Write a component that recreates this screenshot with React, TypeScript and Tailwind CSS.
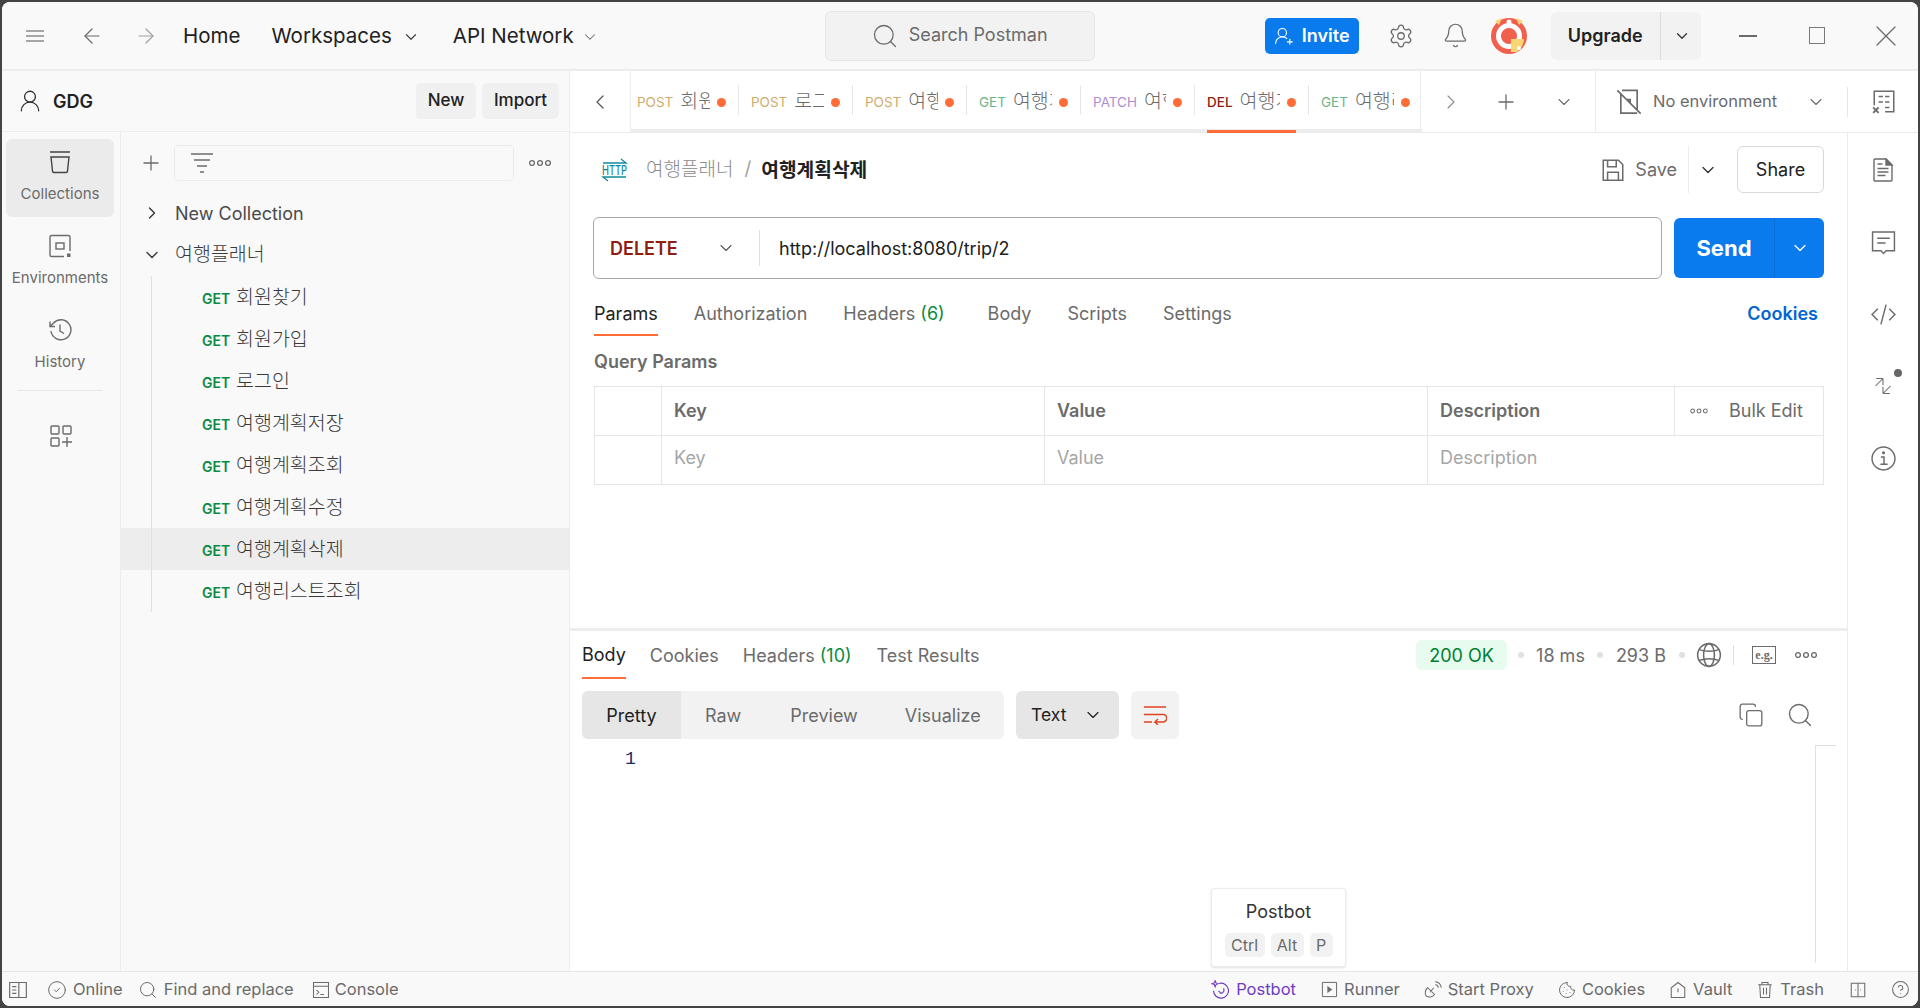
import {
  ArrowLeft,
  ArrowRight,
  Bell,
  ChevronDown,
  ChevronLeft,
  ChevronRight,
  CircleCheck,
  CircleHelp,
  Cookie,
  Copy,
  Plus,
  Search,
  Settings,
  UserRound,
  UserRoundPlus,
  X,
} from "lucide-react";
import type { ReactNode } from "react";

const KO = "font-['Inter','Noto_Sans_CJK_KR',sans-serif]";

const tabs = [
  { m: "POST", c: "text-[#d0ad6c]", t: "회원가입", w: "w-[107px] pl-[6px]" },
  { m: "POST", c: "text-[#d0ad6c]", t: "로그인", w: "w-[114px] pl-[13px]" },
  { m: "POST", c: "text-[#d0ad6c]", t: "여행계획저장", w: "w-[114px] pl-[13px]" },
  { m: "GET", c: "text-[#6bb58a]", t: "여행계획조회", w: "w-[114px] pl-[13px]" },
  { m: "PATCH", c: "text-[#ac8fd0]", t: "여행계획수정", w: "w-[114px] pl-[13px]" },
  { m: "DEL", c: "text-[#8f1d10]", t: "여행계획삭제", w: "w-[114px] pl-[13px]", active: true },
  { m: "GET", c: "text-[#6bb58a]", t: "여행리스트조회", w: "w-[114px] pl-[13px]" },
];

const requests = [
  "회원찾기",
  "회원가입",
  "로그인",
  "여행계획저장",
  "여행계획조회",
  "여행계획수정",
  "여행계획삭제",
  "여행리스트조회",
];

function Svg({ size = 24, children, className = "" }: { size?: number; children: ReactNode; className?: string }) {
  return (
    <svg
      width={size}
      height={size}
      viewBox="0 0 24 24"
      fill="none"
      stroke="currentColor"
      strokeWidth={1.4}
      className={`shrink-0 ${className}`}
    >
      {children}
    </svg>
  );
}

// the three open circles Postman uses for its "more" buttons
function Dots({ className = "" }: { className?: string }) {
  return (
    <svg width="22" height="8" viewBox="0 0 22 8" fill="none" stroke="currentColor" strokeWidth="1.3" className={`shrink-0 ${className}`}>
      <circle cx="3" cy="4" r="2.4" />
      <circle cx="11" cy="4" r="2.4" />
      <circle cx="19" cy="4" r="2.4" />
    </svg>
  );
}

function Logo() {
  return (
    <svg width="36" height="36" viewBox="0 0 36 36" className="shrink-0">
      <circle cx="18" cy="18" r="18" fill="#f0604c" />
      <path d="M4 3 L11 0 L8 7 Z M32 3 L25 0 L28 7 Z" fill="#f7d774" />
      <circle cx="18" cy="4" r="2.5" fill="#fff" />
      <circle cx="18" cy="18" r="10.5" fill="none" stroke="#fff" strokeWidth="5" />
      <path d="M20 21h13a18 18 0 0 1-7 13h-6z" fill="#f7d774" />
      <circle cx="28" cy="30" r="2" fill="#fff" />
    </svg>
  );
}

function TitleBar() {
  return (
    <div className="flex h-[69px] shrink-0 items-center border-b-2 border-[#ececec] bg-[#f9f9f9] text-[#212121]">
      <div className="ml-[24px] w-[18px] text-[#8a8a8a]">
        <svg width="18" height="12" viewBox="0 0 18 12" stroke="currentColor" strokeWidth="1.4">
          <path d="M0 1h18M0 6h18M0 11h18" />
        </svg>
      </div>
      <ArrowLeft size={24} strokeWidth={1.2} className="ml-[36px] text-[#6b6b6b]" />
      <ArrowRight size={24} strokeWidth={1.2} className="ml-[30px] text-[#a0a0a0]" />
      <span className="ml-[25px] pt-[2px] text-[20.5px]">Home</span>
      <span className="ml-[31px] flex items-center pt-[2px] text-[20.5px]">
        Workspaces
        <ChevronDown size={18} strokeWidth={1.6} className="ml-[10px] text-[#444]" />
      </span>
      <span className="ml-[33px] flex items-center pt-[2px] text-[20.5px]">
        API Network
        <ChevronDown size={18} strokeWidth={1.4} className="ml-[7px] text-[#6b6b6b]" />
      </span>
      <div className="ml-[226px] flex h-[50px] w-[270px] items-center rounded-[6px] border border-[#e6e6e6] bg-[#f2f2f2] pl-[45px] text-[18px] text-[#6b6b6b]">
        <Search size={28} strokeWidth={1.1} />
        <span className="ml-[10px] pb-[2px]">Search Postman</span>
      </div>
      <div className="ml-[170px] flex h-[36px] w-[94px] items-center justify-center gap-[8px] rounded-[5px] bg-[#097bed] text-[18px] font-semibold text-white">
        <UserRoundPlus size={20} strokeWidth={1.3} />
        Invite
      </div>
      <Settings size={26} strokeWidth={1.2} className="ml-[29px] text-[#6b6b6b]" />
      <Bell size={27} strokeWidth={1.1} className="ml-[28px] text-[#6b6b6b]" />
      <div className="ml-[22px]">
        <Logo />
      </div>
      <div className="ml-[24px] flex h-[48px] w-[150px] items-center rounded-[6px] bg-[#f2f2f2]">
        <span className="w-[110px] border-r border-[#dcdcdc] text-center text-[18px] leading-[48px] font-semibold">
          Upgrade
        </span>
        <ChevronDown size={18} strokeWidth={1.7} className="ml-[12px] text-[#333]" />
      </div>
      <div className="ml-[38px] h-[2px] w-[18px] bg-[#6b6b6b]" />
      <div className="ml-[52px] h-[17px] w-[16px] border border-[#7a7a7a]" />
      <X size={36} strokeWidth={0.85} className="ml-[43px] text-[#6b6b6b]" />
    </div>
  );
}

function RailItem({ label, icon, active }: { label: string; icon: ReactNode; active?: boolean }) {
  return (
    <div
      className={`mx-[4px] flex h-[78px] w-[108px] flex-col items-center rounded-[6px] pt-[11px] text-[15px] text-[#6b6b6b] ${
        active ? "bg-[#ebebeb] text-[#3a3a3a]" : ""
      }`}
    >
      {icon}
      <span className="mt-[9px] leading-[22px]">{label}</span>
    </div>
  );
}

function Sidebar() {
  return (
    <div className="flex w-[568px] shrink-0 flex-col border-r border-[#ececec] bg-[#f9f9f9]">
      <div className="flex h-[61px] shrink-0 items-center border-b border-[#ececec]">
        <UserRound size={26} strokeWidth={1.2} className="ml-[15px] text-[#333]" />
        <span className="ml-[10px] text-[18px] font-semibold text-[#212121]">GDG</span>
        <div className="ml-auto mr-[10px] flex gap-[6px] text-[17px] font-medium text-[#212121]">
          <div className="flex h-[36px] w-[60px] items-center justify-center rounded-[5px] bg-[#f0f0f0]">New</div>
          <div className="flex h-[36px] w-[77px] items-center justify-center rounded-[5px] bg-[#f0f0f0]">Import</div>
        </div>
      </div>
      <div className="flex min-h-0 flex-1">
        <div className="flex w-[119px] shrink-0 flex-col border-r border-[#ececec] pt-[7px]">
          <RailItem
            active
            label="Collections"
            icon={
              <Svg size={24} className="text-[#444]">
                <path d="M2 2h20M3 7h18l-1.500 14a1.500 1.500 0 0 1-1.500 1.500H6A1.500 1.500 0 0 1 4.500 21z" />
              </Svg>
            }
          />
          <div className="h-[6px]" />
          <RailItem
            label="Environments"
            icon={
              <Svg size={24} className="text-[#6b6b6b]">
                <path d="M16 22.500H3.500A1.500 1.500 0 0 1 2 21V3A1.500 1.500 0 0 1 3.500 1.500h17A1.500 1.500 0 0 1 22 3v14" />
                <rect x="8" y="9" width="8" height="6" />
                <rect x="19" y="19.500" width="3.500" height="3.500" fill="currentColor" stroke="none" />
              </Svg>
            }
          />
          <div className="h-[6px]" />
          <RailItem
            label="History"
            icon={
              <Svg size={24} className="text-[#6b6b6b]">
                <path d="M3 13a10 10 0 1 0 2.500-8L2 8.500M2 3.500v5h5M12 6.500V13l4 2.500" />
              </Svg>
            }
          />
          <div className="mx-[16px] mt-[5px] h-px w-[84px] bg-[#e6e6e6]" />
          <div className="mt-[33px] flex justify-center text-[#6b6b6b]">
            <Svg size={24}>
              <rect x="2" y="2" width="8" height="8" rx="1" />
              <rect x="14" y="2" width="8" height="8" rx="1" />
              <rect x="2" y="14" width="8" height="8" rx="1" />
              <path d="M18 13v10M13 18h10" />
            </Svg>
          </div>
        </div>
        <div className="flex min-w-0 flex-1 flex-col">
          <div className="mt-[13px] flex h-[36px] items-center">
            <Plus size={24} strokeWidth={1.3} className="ml-[18px] text-[#6b6b6b]" />
            <div className="ml-[11px] flex h-[36px] w-[340px] items-center rounded-[3px] border border-[#ececec] pl-[16px] text-[#6b6b6b]">
              <svg width="22" height="20" viewBox="0 0 22 20" stroke="currentColor" strokeWidth="1.5">
                <path d="M0 1h22M3 7h16M6 13h10M9 19h4" />
              </svg>
            </div>
            <Dots className="ml-[15px] text-[#6b6b6b]" />
          </div>
          <div className={`mt-[11px] flex h-[42px] items-center text-[18px] text-[#4a4a4a] ${KO}`}>
            <ChevronRight size={20} strokeWidth={1.6} className="ml-[21px] text-[#333]" />
            <span className="ml-[13px]">New Collection</span>
          </div>
          <div className={`flex h-[42px] items-center text-[19.5px] font-light text-[#3a3a3a] ${KO}`}>
            <ChevronDown size={20} strokeWidth={1.6} className="ml-[21px] text-[#333]" />
            <span className="ml-[13px]">여행플래너</span>
          </div>
          {requests.map((r, i) => (
            <div
              key={r}
              className={`relative flex h-[42px] shrink-0 items-center pt-[2px] pl-[81px] ${i === 6 ? "bg-[#ededed]" : ""} ${KO}`}
            >
              <div className="absolute top-0 bottom-0 left-[30px] w-px bg-[#e0e0e0]" />
              <span className="w-[34px] text-[14px] font-semibold text-[#0c8a3e]">GET</span>
              <span className="text-[19.5px] font-light text-[#3a3a3a]">{r}</span>
            </div>
          ))}
        </div>
      </div>
    </div>
  );
}

function TabBar() {
  return (
    <div className="flex h-[62px] shrink-0 border-b border-[#ececec] bg-white">
      <div className="flex w-[61px] shrink-0 items-center justify-center border-r border-[#ececec]">
        <ChevronLeft size={24} strokeWidth={1.2} className="text-[#555]" />
      </div>
      <div className={`flex w-[790px] shrink-0 border-r border-[#ececec] ${KO}`}>
        {tabs.map((t, i) => (
          <div key={i} className={`flex shrink-0 items-center border-b-[3px] border-[#ededed] ${t.w}`}>
            <div
              className={`-mb-[3px] flex h-[62px] w-[89px] shrink-0 items-center border-b-[3px] pt-[4px] ${
                t.active ? "border-[#ff6c37]" : "border-transparent"
              }`}
            >
              <span className={`shrink-0 text-[13.5px] ${t.active ? "font-medium" : ""} ${t.c}`}>{t.m}</span>
              <span className="ml-[7px] min-w-0 flex-1 overflow-hidden text-[19.5px] font-light whitespace-nowrap text-[#6b6b6b]">
                {t.t}
              </span>
              <span className="ml-[7px] h-[9px] w-[9px] shrink-0 rounded-full bg-[#ff6c37]" />
            </div>
            {i < tabs.length - 1 && <span className="ml-[12px] h-[30px] w-px shrink-0 bg-[#e6e6e6]" />}
          </div>
        ))}
      </div>
      <ChevronRight size={24} strokeWidth={1.1} className="ml-[18px] self-center text-[#8a8a8a]" />
      <Plus size={24} strokeWidth={1.3} className="ml-[31px] self-center text-[#6b6b6b]" />
      <ChevronDown size={20} strokeWidth={1.3} className="ml-[36px] self-center text-[#6b6b6b]" />
      <div className="ml-[21px] flex min-w-0 flex-1 items-center border-l border-[#ececec]">
        <Svg size={28} className="ml-[19px] text-[#6b6b6b]">
          <path d="M6 2h13v17M5 5v16.500h14M2 2l20 20M10 10h3v3" />
        </Svg>
        <span className="ml-[10px] text-[16.5px] text-[#6b6b6b]">No environment</span>
        <ChevronDown size={20} strokeWidth={1.3} className="ml-[29px] text-[#6b6b6b]" />
        <div className="ml-[21px] h-[30px] w-px bg-[#e6e6e6]" />
        <Svg size={26} className="ml-[23px] text-[#6b6b6b]">
          <path d="M3 15V2h18v19H13M7 7h4M13 7h4M7 12h4M13 12h4M13 17h4" />
          <path d="M2 17l5 5M7 17l-5 5" strokeWidth={1.8} />
        </Svg>
      </div>
    </div>
  );
}

function Request() {
  return (
    <div className="flex h-[495px] shrink-0 flex-col px-[23px]">
      <div className="mt-[13px] flex h-[47px] items-center">
        <svg width="27" height="24" viewBox="0 0 27 24" fill="none" stroke="#0f8a9b" strokeWidth="1.3" className="ml-[8px]">
          <path d="M2 5h23l-5-4M25 19H2l5 4" />
          <text x="1" y="16.500" fontFamily="Inter" fontSize="13" fontWeight="500" fill="#0f8a9b" stroke="none" textLength="25" lengthAdjust="spacingAndGlyphs">
            HTTP
          </text>
        </svg>
        <span className={`ml-[18px] pt-[2px] text-[19px] font-light text-[#8a8a8a] ${KO}`}>여행플래너</span>
        <span className="ml-[11px] text-[19px] text-[#a0a0a0]">/</span>
        <span className={`ml-[10px] pt-[2px] text-[19.2px] font-bold text-[#212121] ${KO}`}>여행계획삭제</span>
        <Svg size={26} className="ml-auto text-[#6b6b6b]">
          <path d="M3 3h14l4 4v14.500H3zM7 3v6h8V3M7 21.500V14h10v7.500" />
        </Svg>
        <span className="ml-[9px] text-[18px] text-[#6b6b6b]">Save</span>
        <div className="ml-[11px] flex h-[47px] w-[38px] items-center justify-center border-l border-[#ececec]">
          <ChevronDown size={20} strokeWidth={1.6} className="text-[#333]" />
        </div>
        <div className="ml-[11px] flex h-[47px] w-[87px] items-center justify-center rounded-[6px] border border-[#d9d9d9] text-[18px] text-[#212121]">
          Share
        </div>
      </div>
      <div className="mt-[24px] flex h-[62px]">
        <div className="flex min-w-0 flex-1 items-center rounded-[6px] border border-[#a6a6a6] text-[18px]">
          <span className="ml-[16px] w-[90px] font-semibold text-[#8f1d10]">DELETE</span>
          <ChevronDown size={20} strokeWidth={1.3} className="ml-[16px] text-[#555]" />
          <div className="ml-[23px] h-[36px] w-px bg-[#e0e0e0]" />
          <span className="ml-[19px] text-[#212121]">http://localhost:8080/trip/2</span>
        </div>
        <div className="ml-[12px] flex h-[60px] w-[150px] self-center rounded-[6px] bg-[#097bed] text-white">
          <div className="flex w-[101px] items-center justify-center border-r border-[#0a6fd4] text-[22px] font-bold">Send</div>
          <div className="flex flex-1 items-center justify-center">
            <ChevronDown size={20} strokeWidth={1.5} />
          </div>
        </div>
      </div>
      <div className="mt-[13px] flex h-[42px] items-start pt-[8px] text-[18px] text-[#6b6b6b]">
        <span className="ml-px -mb-[8px] h-[36px] border-b-2 border-[#ff6c37] text-[#212121]">Params</span>
        <span className="ml-[36px]">Authorization</span>
        <span className="ml-[36px]">
          Headers <span className="text-[#0c8a3e]">(6)</span>
        </span>
        <span className="ml-[43px]">Body</span>
        <span className="ml-[36px]">Scripts</span>
        <span className="ml-[36px]">Settings</span>
        <span className="ml-auto mr-[6px] font-semibold text-[#0265d2]">Cookies</span>
      </div>
      <div className="mt-[14px] ml-px text-[18px] font-semibold text-[#6b6b6b]">Query Params</div>
      <div className="mt-[11px] ml-px border border-[#e6e6e6] text-[18px]">
        <div className="flex h-[49px] items-center border-b border-[#e6e6e6] font-semibold text-[#6b6b6b]">
          <div className="h-full w-[67px] border-r border-[#e6e6e6]" />
          <div className="flex h-full w-[383px] items-center border-r border-[#e6e6e6] pb-[2px] pl-[12px]">Key</div>
          <div className="flex h-full w-[383px] items-center border-r border-[#e6e6e6] pb-[2px] pl-[12px]">Value</div>
          <div className="flex h-full w-[247px] items-center border-r border-[#e6e6e6] pb-[2px] pl-[12px]">Description</div>
          <Dots className="ml-[13px] scale-[0.8]" />
          <span className="ml-[19px] pb-[2px] font-normal">Bulk Edit</span>
        </div>
        <div className="flex h-[48px] items-center text-[#a6a6a6]">
          <div className="h-full w-[67px] border-r border-[#e6e6e6]" />
          <div className="flex h-full w-[383px] items-center border-r border-[#e6e6e6] pb-[5px] pl-[12px]">Key</div>
          <div className="flex h-full w-[383px] items-center border-r border-[#e6e6e6] pb-[5px] pl-[12px]">Value</div>
          <div className="pb-[5px] pl-[12px]">Description</div>
        </div>
      </div>
    </div>
  );
}

function Response() {
  return (
    <div className="relative flex min-h-0 flex-1 flex-col border-t-[3px] border-[#ededed] pr-[11px] pl-[12px]">
      <div className="flex h-[48px] items-center text-[18px] text-[#6b6b6b]">
        <span className="flex h-[48px] items-center border-b-2 border-[#ff6c37] text-[#212121]">Body</span>
        <span className="ml-[24px]">Cookies</span>
        <span className="ml-[24px]">
          Headers <span className="text-[#0c8a3e]">(10)</span>
        </span>
        <span className="ml-[25px]">Test Results</span>
        <div className="ml-auto flex items-center">
          <span className="flex h-[30px] w-[91px] items-center justify-center rounded-[6px] bg-[#e7fcef] text-[18px] text-[#007f31]">
            200 OK
          </span>
          <span className="ml-[11px] h-[6px] w-[6px] rounded-full bg-[#e0e0e0]" />
          <span className="ml-[12px]">18 ms</span>
          <span className="ml-[12px] h-[6px] w-[6px] rounded-full bg-[#e0e0e0]" />
          <span className="ml-[13px]">293 B</span>
          <span className="ml-[13px] h-[6px] w-[6px] rounded-full bg-[#e0e0e0]" />
          <Svg size={26} className="ml-[11px]">
            <circle cx="12" cy="12" r="10.500" />
            <ellipse cx="12" cy="12" rx="5" ry="10.500" />
            <path d="M3 7c5 2 13 2 18 0M3 17c5-2 13-2 18 0" />
          </Svg>
          <div className="ml-[11px] h-[20px] w-px bg-[#e0e0e0]" />
          <span className="ml-[18px] flex h-[18px] w-[24px] items-center justify-center border border-[#6b6b6b] font-['Liberation_Serif',serif] text-[12px] font-bold">
            e.g.
          </span>
          <Dots className="mr-[19px] ml-[19px]" />
        </div>
      </div>
      <div className="mt-[12px] flex h-[48px] items-center text-[18px]">
        <div className="flex h-full w-[422px] items-center overflow-hidden rounded-[6px] bg-[#f2f2f2] text-[#6b6b6b]">
          <span className="flex h-full w-[99px] items-center justify-center bg-[#e6e6e6] text-[#212121]">Pretty</span>
          <span className="ml-[24px]">Raw</span>
          <span className="ml-[49px]">Preview</span>
          <span className="ml-[47px]">Visualize</span>
        </div>
        <div className="ml-[12px] flex h-full w-[103px] items-center rounded-[6px] bg-[#e6e6e6] pl-[15px] text-[17.5px] text-[#212121]">
          Text
          <ChevronDown size={20} strokeWidth={1.4} className="ml-[17px]" />
        </div>
        <div className="ml-[12px] flex h-full w-[48px] items-center justify-center rounded-[6px] bg-[#f2f2f2] text-[#e0431f]">
          <svg width="24" height="20" viewBox="0 0 24 20" fill="none" stroke="currentColor" strokeWidth="1.5">
            <path d="M1 2h22M1 17h8M1 9.500h19a3.500 3.500 0 0 1 0 7.500h-8l3-3M12 17l3 3" />
          </svg>
        </div>
        <Copy size={26} strokeWidth={1.2} className="ml-auto text-[#6b6b6b]" />
        <Search size={28} strokeWidth={1.2} className="mr-[22px] ml-[22px] text-[#6b6b6b]" />
      </div>
      <div className="flex min-h-0 flex-1">
        <span className="mt-[7px] ml-[43px] font-['Liberation_Mono',monospace] text-[18px] text-[#1a2a6c]">1</span>
        <div className="mt-[6px] mb-[8px] ml-auto w-[21px] border-t border-l border-[#e0e0e0]" />
      </div>
      <div className="absolute right-[501px] bottom-[4px] flex h-[79px] w-[135px] flex-col items-center rounded-[3px] border border-[#ececec] bg-white pt-[10px] shadow-sm">
        <span className="text-[18px] leading-[26px] text-[#333]">Postbot</span>
        <div className="mt-[8px] flex gap-[6px] text-[16px] text-[#6b6b6b]">
          <span className="flex h-[24px] w-[40px] items-center justify-center rounded-[5px] bg-[#f2f2f2]">Ctrl</span>
          <span className="flex h-[24px] w-[33px] items-center justify-center rounded-[5px] bg-[#f2f2f2]">Alt</span>
          <span className="flex h-[24px] w-[23px] items-center justify-center rounded-[5px] bg-[#f2f2f2]">P</span>
        </div>
      </div>
    </div>
  );
}

function RightRail() {
  return (
    <div className="flex w-[71px] shrink-0 flex-col items-center border-l border-[#ececec] pt-px text-[#6b6b6b] [&>div]:flex [&>div]:h-[72px] [&>div]:items-center [&>div]:justify-center">
      <div>
        <Svg size={24}>
          <path d="M3 2a1 1 0 0 1 1-1h11l6 6v15a1 1 0 0 1-1 1H4a1 1 0 0 1-1-1zM6.500 6h5M6.500 10.500h11M6.500 14h11M6.500 17.500h8" />
          <path d="M15 1v6h6z" fill="currentColor" />
        </Svg>
      </div>
      <div>
        <Svg size={25}>
          <path d="M1.500 2h21v18h-8l-2.500 2.500L9.500 20h-8zM6 8h12M6 12.500h8" />
        </Svg>
      </div>
      <div>
        <Svg size={25}>
          <path d="M6.500 6.500L1 12l5.500 5.500M17.500 6.500L23 12l-5.500 5.500M14.500 2.500l-5 19" />
        </Svg>
      </div>
      <div className="relative">
        <Svg size={18}>
          <path d="M2 12L12 2M12 2H3M12 2v9M22 12L12 22M12 22h9M12 22v-9" />
        </Svg>
        <span className="absolute top-[19px] left-[20px] h-[8px] w-[8px] rounded-full bg-[#666]" />
      </div>
      <div>
        <Svg size={25}>
          <circle cx="12" cy="12" r="11" />
          <path d="M9.500 10.500H12.500V17.500M9 17.500h7" />
          <circle cx="12" cy="6.500" r="0.800" fill="currentColor" />
        </Svg>
      </div>
    </div>
  );
}

function StatusItem({ icon, label, className = "" }: { icon: ReactNode; label: string; className?: string }) {
  return (
    <span className={`flex items-center gap-[6px] ${className}`}>
      {icon}
      {label}
    </span>
  );
}

function StatusBar() {
  return (
    <div className="flex h-[35px] shrink-0 items-center border-t border-[#e6e6e6] bg-[#f9f9f9] pt-px text-[16.5px] text-[#6b6b6b]">
      <Svg size={20} className="ml-[6px]">
        <path d="M2 3h20v18H2zM13 3v18M5 8h5M5 12h5M5 16h5" />
      </Svg>
      <StatusItem className="ml-[19px]" icon={<CircleCheck size={20} strokeWidth={1.2} />} label="Online" />
      <StatusItem className="ml-[15px]" icon={<Search size={20} strokeWidth={1.2} />} label="Find and replace" />
      <StatusItem
        className="ml-[18px] !gap-[5px]"
        icon={
          <Svg size={18}>
            <path d="M2 2h20v20H2zM2 7h20M6 12l3 3-3 3M11 18h5" />
          </Svg>
        }
        label="Console"
      />
      <StatusItem
        className="ml-auto !gap-[5px] text-[#6d3dc4]"
        icon={
          <Svg size={20}>
            <path d="M10 4a9 9 0 1 1-7 9M15 10a4 4 0 0 1-3 6l-3-3M5 1l1 2.500 2.500 1-2.500 1L5 8 4 5.500 1.500 4.500l2.500-1z" />
          </Svg>
        }
        label="Postbot"
      />
      <StatusItem
        className="ml-[25px]"
        icon={
          <Svg size={17}>
            <path d="M2 2h20v20H2z" />
            <path d="M9 7l7 5-7 5z" fill="currentColor" stroke="none" />
          </Svg>
        }
        label="Runner"
      />
      <StatusItem
        className="ml-[24px]"
        icon={
          <Svg size={18}>
            <path d="M5 9l9 9a8 8 0 0 1-11 2 8 8 0 0 1 2-11zM8 15l5-6M15 5a4 4 0 0 1 4 4M15 1a8 8 0 0 1 8 8" />
          </Svg>
        }
        label="Start Proxy"
      />
      <StatusItem className="ml-[24px]" icon={<Cookie size={18} strokeWidth={1.3} />} label="Cookies" />
      <StatusItem
        className="ml-[24px]"
        icon={
          <Svg size={18}>
            <path d="M3 22V9l9-7 9 7v13zM12 10v5" />
          </Svg>
        }
        label="Vault"
      />
      <StatusItem
        className="ml-[24px]"
        icon={
          <Svg size={18}>
            <path d="M3 5h18M8 5V2h8v3M5 5l1 17h12l1-17M10 9v9M14 9v9" />
          </Svg>
        }
        label="Trash"
      />
      <Svg size={18} className="ml-[25px]">
        <path d="M3 3h18v18H3zM12 3v18M8 12h1M15 12h1" />
      </Svg>
      <CircleHelp size={19} strokeWidth={1.3} className="mr-[8px] ml-[24px]" />
    </div>
  );
}

export default function App() {
  return (
    <div className={`h-[1008px] w-[1920px] overflow-hidden bg-[#444444] p-[2px] ${KO}`}>
      <div className="flex h-full flex-col overflow-hidden rounded-[8px] bg-white">
        <TitleBar />
        <div className="flex min-h-0 flex-1">
          <Sidebar />
          <div className="flex min-w-0 flex-1 flex-col">
            <TabBar />
            <div className="flex min-h-0 flex-1">
              <div className="flex min-w-0 flex-1 flex-col">
                <Request />
                <Response />
              </div>
              <RightRail />
            </div>
          </div>
        </div>
        <StatusBar />
      </div>
    </div>
  );
}
